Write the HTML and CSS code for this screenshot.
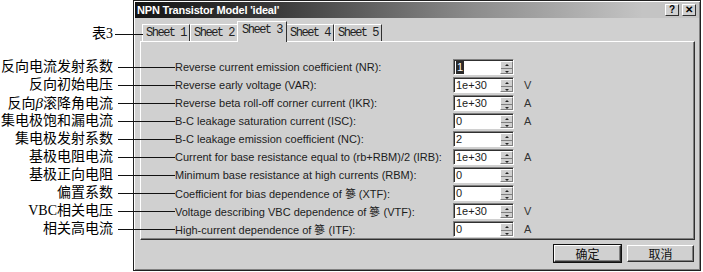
FILE: index.html
```html
<!DOCTYPE html>
<html lang="zh-CN">
<head>
    <meta charset="UTF-8">
    <title>NPN Transistor Model 'ideal'</title>
    <link rel="stylesheet" href="styles.css">
</head>
<body>
    <div class="page">
        <div class="notes">
            <div class="note note-tab">表3</div>
            <div class="note-list">
                <div class="note">反向电流发射系数</div>
                <div class="note">反向初始电压</div>
                <div class="note">反向<i class="greek">β</i>滚降角电流</div>
                <div class="note">集电极饱和漏电流</div>
                <div class="note">集电极发射系数</div>
                <div class="note">基极电阻电流</div>
                <div class="note">基极正向电阻</div>
                <div class="note">偏置系数</div>
                <div class="note">VBC相关电压</div>
                <div class="note">相关高电流</div>
            </div>
        </div>

        <div class="window">
            <div class="titlebar">
                <span class="title">NPN Transistor Model 'ideal'</span>
                <div class="caption-btns">
                    <span class="cap-btn">?</span>
                    <span class="cap-btn">&#x2715;</span>
                </div>
            </div>

            <div class="tabs">
                <span class="tab">Sheet 1</span>
                <span class="tab">Sheet 2</span>
                <span class="tab active">Sheet 3</span>
                <span class="tab">Sheet 4</span>
                <span class="tab">Sheet 5</span>
            </div>

            <div class="panel">
                <div class="row">
                    <span class="label">Reverse current emission coefficient (NR):</span>
                    <span class="field"><span class="value"><span class="selected">1</span></span><span class="spin"></span></span>
                    <span class="unit"></span>
                </div>
                <div class="row">
                    <span class="label">Reverse early voltage (VAR):</span>
                    <span class="field"><span class="value">1e+30</span><span class="spin"></span></span>
                    <span class="unit">V</span>
                </div>
                <div class="row">
                    <span class="label">Reverse beta roll-off corner current (IKR):</span>
                    <span class="field"><span class="value">1e+30</span><span class="spin"></span></span>
                    <span class="unit">A</span>
                </div>
                <div class="row">
                    <span class="label">B-C leakage saturation current (ISC):</span>
                    <span class="field"><span class="value">0</span><span class="spin"></span></span>
                    <span class="unit">A</span>
                </div>
                <div class="row">
                    <span class="label">B-C leakage emission coefficient (NC):</span>
                    <span class="field"><span class="value">2</span><span class="spin"></span></span>
                    <span class="unit"></span>
                </div>
                <div class="row">
                    <span class="label">Current for base resistance equal to (rb+RBM)/2 (IRB):</span>
                    <span class="field"><span class="value">1e+30</span><span class="spin"></span></span>
                    <span class="unit">A</span>
                </div>
                <div class="row">
                    <span class="label">Minimum base resistance at high currents (RBM):</span>
                    <span class="field"><span class="value">0</span><span class="spin"></span></span>
                    <span class="unit"></span>
                </div>
                <div class="row">
                    <span class="label">Coefficient for bias dependence of 篸 (XTF):</span>
                    <span class="field"><span class="value">0</span><span class="spin"></span></span>
                    <span class="unit"></span>
                </div>
                <div class="row">
                    <span class="label">Voltage describing VBC dependence of 篸 (VTF):</span>
                    <span class="field"><span class="value">1e+30</span><span class="spin"></span></span>
                    <span class="unit">V</span>
                </div>
                <div class="row">
                    <span class="label">High-current dependence of 篸 (ITF):</span>
                    <span class="field"><span class="value">0</span><span class="spin"></span></span>
                    <span class="unit">A</span>
                </div>
            </div>

            <div class="buttons">
                <span class="btn default">确定</span>
                <span class="btn">取消</span>
            </div>
        </div>
    </div>
</body>
</html>
```

FILE: styles.css
```css
:root {
    --face: #d0d0d0;
    --shadow: #808080;
    --dark: #303030;
    --light: #ffffff;
    --text: #1c1c1c;
}

body {
    margin: 0;
    background: #ffffff;
    font-family: 'Liberation Sans', Arial, sans-serif;
    color: var(--text);
}

.page {
    display: flex;
    width: 703px;
    height: 272px;
    overflow: hidden;
}

/* annotations on the left */

.notes {
    width: 133px;
    flex-shrink: 0;
    font-family: 'Liberation Serif', 'Noto Sans CJK SC', serif;
    font-size: 14px;
    color: #000;
}

.note {
    position: relative;
    height: 18px;
    line-height: 18px;
    padding-right: 20px;
    text-align: right;
    white-space: nowrap;
}

.note::after {
    content: '';
    position: absolute;
    z-index: 2;
    left: calc(100% - 15px);
    top: 9px;
    width: 57px;
    border-top: 1px solid #111;
}

.note-tab {
    margin-top: 25px;
}

.note-tab::after {
    left: calc(100% - 18px);
    width: 28px;
}

.note-list {
    margin-top: 15px;
}

.greek {
    font-family: 'Liberation Serif', serif;
    font-size: 15px;
}

/* dialog window */

.window {
    width: 568px;
    height: 271px;
    box-sizing: border-box;
    background: var(--face);
    border: 1px solid #202020;
    padding: 1px;
    box-shadow: inset 1px 1px var(--light), inset -1px -1px var(--shadow);
}

.titlebar {
    display: flex;
    align-items: center;
    justify-content: space-between;
    height: 16px;
    background: linear-gradient(90deg, #141414 0%, #3a3a3a 25%, #8c8c8c 60%, #c4c4c4 90%);
}

.title {
    padding-left: 2px;
    color: #fff;
    font-weight: bold;
    font-size: 11px;
    letter-spacing: -0.2px;
}

.caption-btns {
    display: flex;
    gap: 3px;
    padding-right: 3px;
}

.cap-btn {
    width: 14px;
    height: 12px;
    box-sizing: border-box;
    background: var(--face);
    border: 1px solid;
    border-color: var(--light) var(--dark) var(--dark) var(--light);
    font-size: 10px;
    font-weight: bold;
    line-height: 10px;
    text-align: center;
    color: #000;
}

.tabs {
    display: flex;
    align-items: flex-end;
    height: 23px;
    padding-left: 7px;
}

.tab {
    width: 48px;
    height: 17px;
    box-sizing: border-box;
    border-top: 1px solid var(--light);
    border-left: 1px solid var(--light);
    border-right: 1px solid var(--dark);
    font-family: 'Liberation Mono', monospace;
    font-size: 12px;
    letter-spacing: -1.5px;
    line-height: 16px;
    text-align: center;
    color: #222;
}

.tab.active {
    width: 50px;
    margin: 0 -1px -1px;
    position: relative;
    z-index: 1;
    background: var(--face);
    line-height: 17px;
    height: 21px;
}

.panel {
    margin-left: 5px;
    width: 555px;
    box-sizing: border-box;
    padding: 16px 0 0 34px;
    border-top: 1px solid var(--light);
    border-left: 1px solid var(--light);
    border-right: 1px solid var(--dark);
    border-bottom: 1px solid var(--dark);
    box-shadow: inset -1px -1px var(--shadow);
    height: 199px;
}

.row {
    display: flex;
    align-items: center;
    height: 18px;
    font-size: 11px;
}

.label {
    width: 278px;
    white-space: nowrap;
}

.field {
    display: flex;
    width: 61px;
    height: 16px;
    box-sizing: border-box;
    border: 1px solid;
    border-color: var(--shadow) var(--light) var(--light) var(--shadow);
    box-shadow: inset 1px 1px var(--dark);
}

.value {
    flex: 1;
    background: #fff;
    margin: 1px 0 0 1px;
    padding-left: 1px;
    font-size: 11px;
    line-height: 13px;
}

.selected {
    display: inline-block;
    background: #2a2a2a;
    color: #fff;
    padding: 0 1px;
    line-height: 13px;
}

/* up/down spinner: two halves split by a line, small arrows via borders */
.spin {
    position: relative;
    width: 13px;
    margin-top: 1px;
    box-sizing: border-box;
    background: linear-gradient(var(--face) 6px, var(--shadow) 6px, var(--shadow) 7px, var(--face) 7px);
    border-top: 1px solid var(--light);
    border-left: 1px solid var(--light);
    border-right: 1px solid var(--shadow);
    border-bottom: 1px solid var(--shadow);
}

.spin::before,
.spin::after {
    content: '';
    position: absolute;
    left: 4px;
    width: 0;
    height: 0;
    border-left: 2px solid transparent;
    border-right: 2px solid transparent;
}

.spin::before {
    top: 2px;
    border-bottom: 2px solid #222;
}

.spin::after {
    top: 9px;
    border-top: 2px solid #222;
}

.unit {
    margin-left: 10px;
    font-size: 11px;
    color: #333;
}

.buttons {
    display: flex;
    justify-content: flex-end;
    gap: 6px;
    margin: 5px 5px 0 0;
}

.btn {
    width: 67px;
    height: 17px;
    box-sizing: border-box;
    border: 1px solid;
    border-color: var(--light) var(--dark) var(--dark) var(--light);
    box-shadow: inset -1px -1px var(--shadow);
    font-family: 'Noto Sans CJK SC', sans-serif;
    font-size: 12px;
    line-height: 15px;
    text-align: center;
    color: #111;
}

.btn.default {
    outline: 1px solid #111;
}
```
